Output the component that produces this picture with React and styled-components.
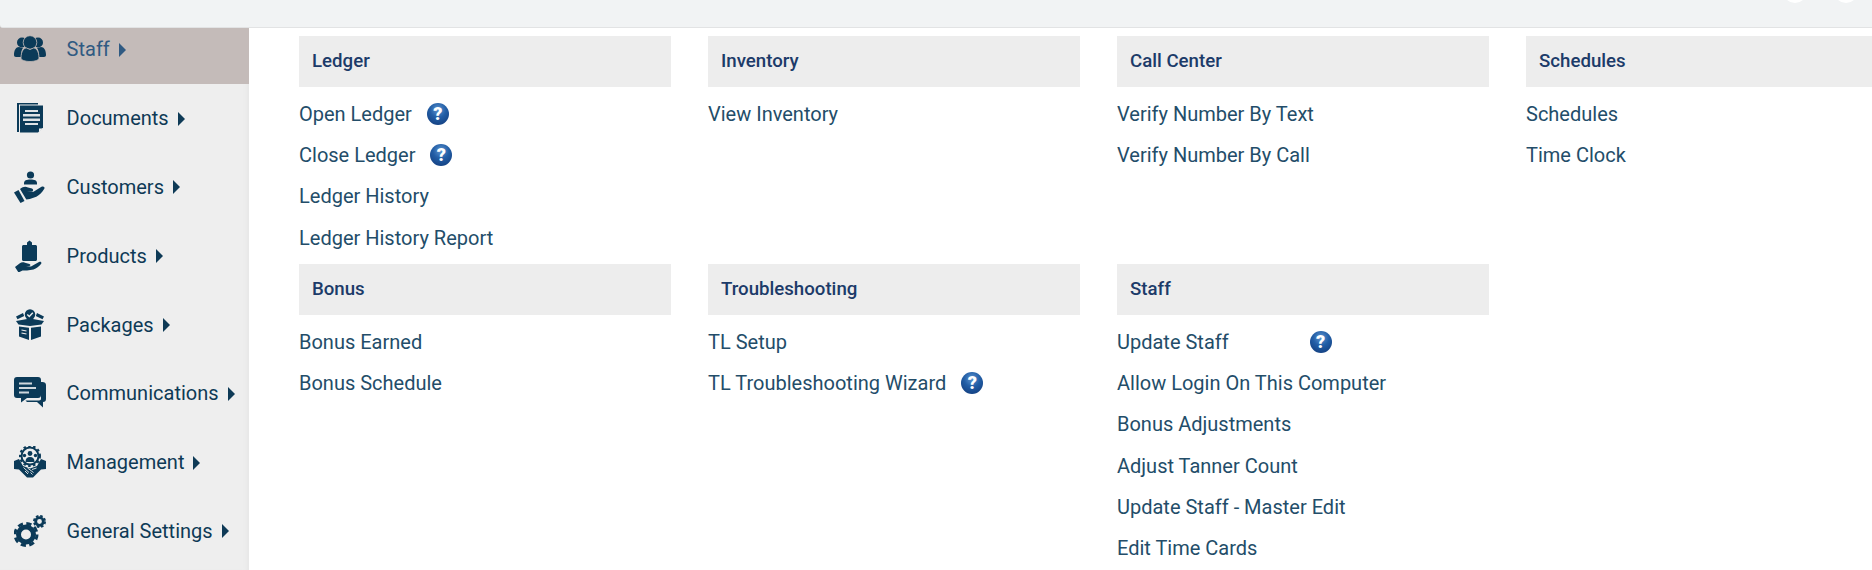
import styled, { createGlobalStyle } from "styled-components"

const GlobalStyle = createGlobalStyle`
  html, body {
    margin: 0;
    padding: 0;
    height: 570px;
    overflow: hidden;
    background: #fff;
    font-family: Roboto, "Liberation Sans", sans-serif;
  }
`

const Page = styled.div`
  width: 1872px;
  height: 570px;
  overflow: hidden;
  display: flex;
  flex-direction: column;
`

const TopBar = styled.div`
  position: relative;
  z-index: 2;
  flex: 0 0 28px;
  box-sizing: border-box;
  background: #f1f3f4;
  border-bottom: 1px solid #e2e3e4;
  border-bottom-left-radius: 3px;
`

const TopDot = styled.span`
  position: absolute;
  top: -21px;
  left: ${(p) => p.$left}px;
  width: 24px;
  height: 24px;
  border-radius: 50%;
  background: #fff;
`

const Body = styled.div`
  flex: 1;
  display: flex;
  min-height: 0;
`

const Sidebar = styled.nav`
  flex: 0 0 249px;
  margin-top: -13px;
  background: #eeeeee;
  box-shadow: inset -5px 0 4px -3px #e6e6e6;
`

const NavItem = styled.div`
  height: 68.8px;
  display: flex;
  align-items: center;
  padding-left: 14px;
  background: ${(p) => (p.$active ? "#c4bbb9" : "transparent")};
  color: ${(p) => (p.$active ? "#305a82" : "#0e3a56")};
  font-size: 20px;
`

const NavIcon = styled.svg`
  flex: 0 0 32px;
  width: 32px;
  height: 32px;
  margin-right: 20.6px;
  fill: #0b3a58;
`

const NavCaret = styled.span`
  width: 0;
  height: 0;
  margin-left: 9px;
  margin-top: 1px;
  border-style: solid;
  border-width: 7px 0 7px 7.5px;
  border-color: transparent transparent transparent currentColor;
`

const Main = styled.main`
  flex: 1;
  min-width: 0;
  padding: 8px 0 0 50px;
  display: grid;
  grid-template-columns: repeat(3, 372px) 1fr;
  grid-auto-rows: min-content;
  column-gap: 37px;
  row-gap: 5.7px;
`

const Section = styled.section`
  min-width: 0;
`

const SectionHead = styled.div`
  height: 50px;
  margin-bottom: 6.5px;
  padding: 0 0 1px 13px;
  display: flex;
  align-items: center;
  background: #ededed;
  color: #1c3b69;
  font-size: 18.67px;
  font-weight: 500;
`

const LinkRow = styled.div`
  height: 41.2px;
  display: flex;
  align-items: center;
  color: #234d69;
  font-size: 20px;
`

const Help = styled.span`
  width: 22px;
  height: 22px;
  margin-left: ${(p) => p.$gap}px;
  border-radius: 50%;
  display: flex;
  align-items: center;
  justify-content: center;
  background: radial-gradient(circle at 50% 30%, #5f95d0 0%, #225ea6 42%, #0f3675 100%);
  color: #fff;
  font-size: 18px;
  font-weight: 900;
  line-height: 1;
`

const icons = {
  staff: (
    <>
      <circle cx="8" cy="9.500" r="5" />
      <circle cx="24" cy="9.500" r="5" />
      <path d="M0 22c0-5 2-8 5-8l4 1c-1.500 1.500-2 5-2 9H2c-1.300 0-2-.7-2-2ZM32 22c0-5-2-8-5-8l-4 1c1.500 1.500 2 4.900 2 9h5c1.300 0 2-.7 2-2Z" />
      <circle cx="16" cy="9.500" r="6.800" stroke="#c4bbb9" strokeWidth=".8" />
      <path d="M7 25c0-7 3-10 5.500-10l3.500 1.500 3.500-1.500c2.500 0 5.500 3 5.500 10 0 1.800-3.500 3.500-9 3.500S7 26.800 7 25Z" stroke="#c4bbb9" strokeWidth=".8" />
    </>
  ),
  documents: (
    <>
      <path d="M3 1h21v1.500H5V30H3Z" />
      <path d="M6 3.500h23v22l-5 5H6Z" />
      <path d="M11 8h13v2H11ZM9 12h17v2.500H9ZM9 16.500h17V19H9ZM11 21h13v2H11Z" fill="#dfe3e6" />
      <path d="M25 26.500h3.500L25 30Z" fill="#eee" />
    </>
  ),
  customers: (
    <>
      <circle cx="16.500" cy="4" r="3.600" />
      <path d="M10 12c0-2.500 2.500-3.500 6.500-3.500S23 9.500 23 12v1.500H10Z" />
      <path d="M0 21.500 4.500 19l6 11-4 2Z" />
      <path d="M6 18c3-2.500 5.500-3 8-1.500l4 1c1.500.5 1.500 2.800 0 3l-5 .5 6.500-.2 8-5c2-1 3.800.5 2.800 2-2 3.500-5 6.500-8 8l-6.500 2.200-3.500.5Z" />
    </>
  ),
  products: (
    <>
      <path d="M9.500 5h3.500V2.500L15.500.5 18 2.500V5h3.500c.8 0 1.500.7 1.500 1.500v13c0 .8-.7 1.500-1.500 1.500h-12c-.8 0-1.500-.7-1.500-1.500v-13C8 5.700 8.700 5 9.500 5Z" />
      <path d="M1 27l4.500-3.500c1.800-1.300 3.500-1.500 5.500-.8l4.500 1.300c1.200.4 1.200 1.800 0 2l-3.500.3 5 .2 8-4.500c2-.8 3 .8 2 2-2 2.500-4.500 4.500-7.500 5.500L13 30.500H8.500L4.500 32.500Z" />
    </>
  ),
  packages: (
    <>
      <circle cx="16" cy="5.500" r="5.200" />
      <path d="M13.300 5.500l2 2 3.500-3.800" fill="none" stroke="#eee" strokeWidth="1.400" />
      <path d="M2 7.500l7-3.500 1.200 3-6.700 3.300ZM30 7.500l-7-3.500-1.200 3 6.700 3.300Z" />
      <path d="M2 12 16 9.500 30 12l-2.500 3.500L16 17 4.500 15.500Z" />
      <path d="M5 17.500l10 1.300V31L5 27.500ZM27 17.500l-10 1.300V31l10-3.500Z" />
      <path d="M7.500 21l5 1M7.500 24l5 1" stroke="#eee" strokeWidth="1.200" />
    </>
  ),
  communications: (
    <>
      <path d="M27 5h1.500c2 0 3.500 1 3.500 3v14c0 2-1 3-3 3v5.500L23 25H13l-1.500-1.500H25c1.500 0 2-1 2-2Z" />
      <path d="M3 0h21c2 0 3 1 3 3v15c0 2-1 3-3 3H13l-6 4.500V21H3c-2 0-3-1-3-3V3c0-2 1-3 3-3Z" />
      <path d="M5 5.500h13v2H5ZM5 10h17v2H5ZM5 14.500h10v2H5Z" fill="#cfd8de" />
    </>
  ),
  management: (
    <>
      <circle cx="16" cy="10" r="8.500" fill="none" stroke="#0b3a58" strokeWidth="2" />
      <circle cx="16" cy="10" r="10" fill="none" stroke="#0b3a58" strokeWidth="2" strokeDasharray="2.500 2.500" />
      <circle cx="16" cy="7.500" r="2.400" />
      <path d="M11.500 16c0-3.500 1.500-5 4.500-5s4.500 1.500 4.500 5Z" />
      <circle cx="10.500" cy="9.500" r="1.700" />
      <circle cx="21.500" cy="9.500" r="1.700" />
      <path d="M0 15l5-2 4 7 7 2.500L23 20l4-7 5 2v8l-5 .5-8 8h-6l-8-8-5-.5Z" />
      <path d="M9.500 21.500l5.500 5M13.500 22l6 4.500M22.500 22l-4.500 1.500M11 25l3 3M16.500 26.500l2 2" stroke="#eee" strokeWidth=".9" fill="none" />
    </>
  ),
  settings: (
    <>
      <circle cx="12" cy="19.500" r="7.500" fill="none" stroke="#0b3a58" strokeWidth="5" />
      <circle cx="12" cy="19.500" r="11" fill="none" stroke="#0b3a58" strokeWidth="3" strokeDasharray="5.200 3.440" />
      <circle cx="25.500" cy="6.500" r="3.800" fill="none" stroke="#0b3a58" strokeWidth="2.800" />
      <circle cx="25.500" cy="6.500" r="5.600" fill="none" stroke="#0b3a58" strokeWidth="1.800" strokeDasharray="2.600 1.800" />
    </>
  ),
}

const navItems = [
  { label: "Staff", icon: "staff", active: true },
  { label: "Documents", icon: "documents" },
  { label: "Customers", icon: "customers" },
  { label: "Products", icon: "products" },
  { label: "Packages", icon: "packages" },
  { label: "Communications", icon: "communications" },
  { label: "Management", icon: "management" },
  { label: "General Settings", icon: "settings" },
]

const sections = [
  {
    title: "Ledger",
    links: [
      { label: "Open Ledger", help: 15 },
      { label: "Close Ledger", help: 15 },
      { label: "Ledger History" },
      { label: "Ledger History Report" },
    ],
  },
  { title: "Inventory", links: [{ label: "View Inventory" }] },
  {
    title: "Call Center",
    links: [{ label: "Verify Number By Text" }, { label: "Verify Number By Call" }],
  },
  { title: "Schedules", links: [{ label: "Schedules" }, { label: "Time Clock" }] },
  {
    title: "Bonus",
    links: [{ label: "Bonus Earned" }, { label: "Bonus Schedule" }],
  },
  {
    title: "Troubleshooting",
    links: [{ label: "TL Setup" }, { label: "TL Troubleshooting Wizard", help: 15 }],
  },
  {
    title: "Staff",
    links: [
      { label: "Update Staff", help: 81 },
      { label: "Allow Login On This Computer" },
      { label: "Bonus Adjustments" },
      { label: "Adjust Tanner Count" },
      { label: "Update Staff - Master Edit" },
      { label: "Edit Time Cards" },
    ],
  },
]

const App = () => {
  return (
    <Page>
      <GlobalStyle />
      <TopBar>
        <TopDot $left={1783} />
        <TopDot $left={1834} />
      </TopBar>
      <Body>
        <Sidebar>
          {navItems.map((item) => (
            <NavItem key={item.label} $active={item.active}>
              <NavIcon viewBox="0 0 32 32">{icons[item.icon]}</NavIcon>
              {item.label}
              <NavCaret />
            </NavItem>
          ))}
        </Sidebar>
        <Main>
          {sections.map((section) => (
            <Section key={section.title}>
              <SectionHead>{section.title}</SectionHead>
              {section.links.map((link) => (
                <LinkRow key={link.label}>
                  {link.label}
                  {link.help && <Help $gap={link.help}>?</Help>}
                </LinkRow>
              ))}
            </Section>
          ))}
        </Main>
      </Body>
    </Page>
  )
}

export default App
